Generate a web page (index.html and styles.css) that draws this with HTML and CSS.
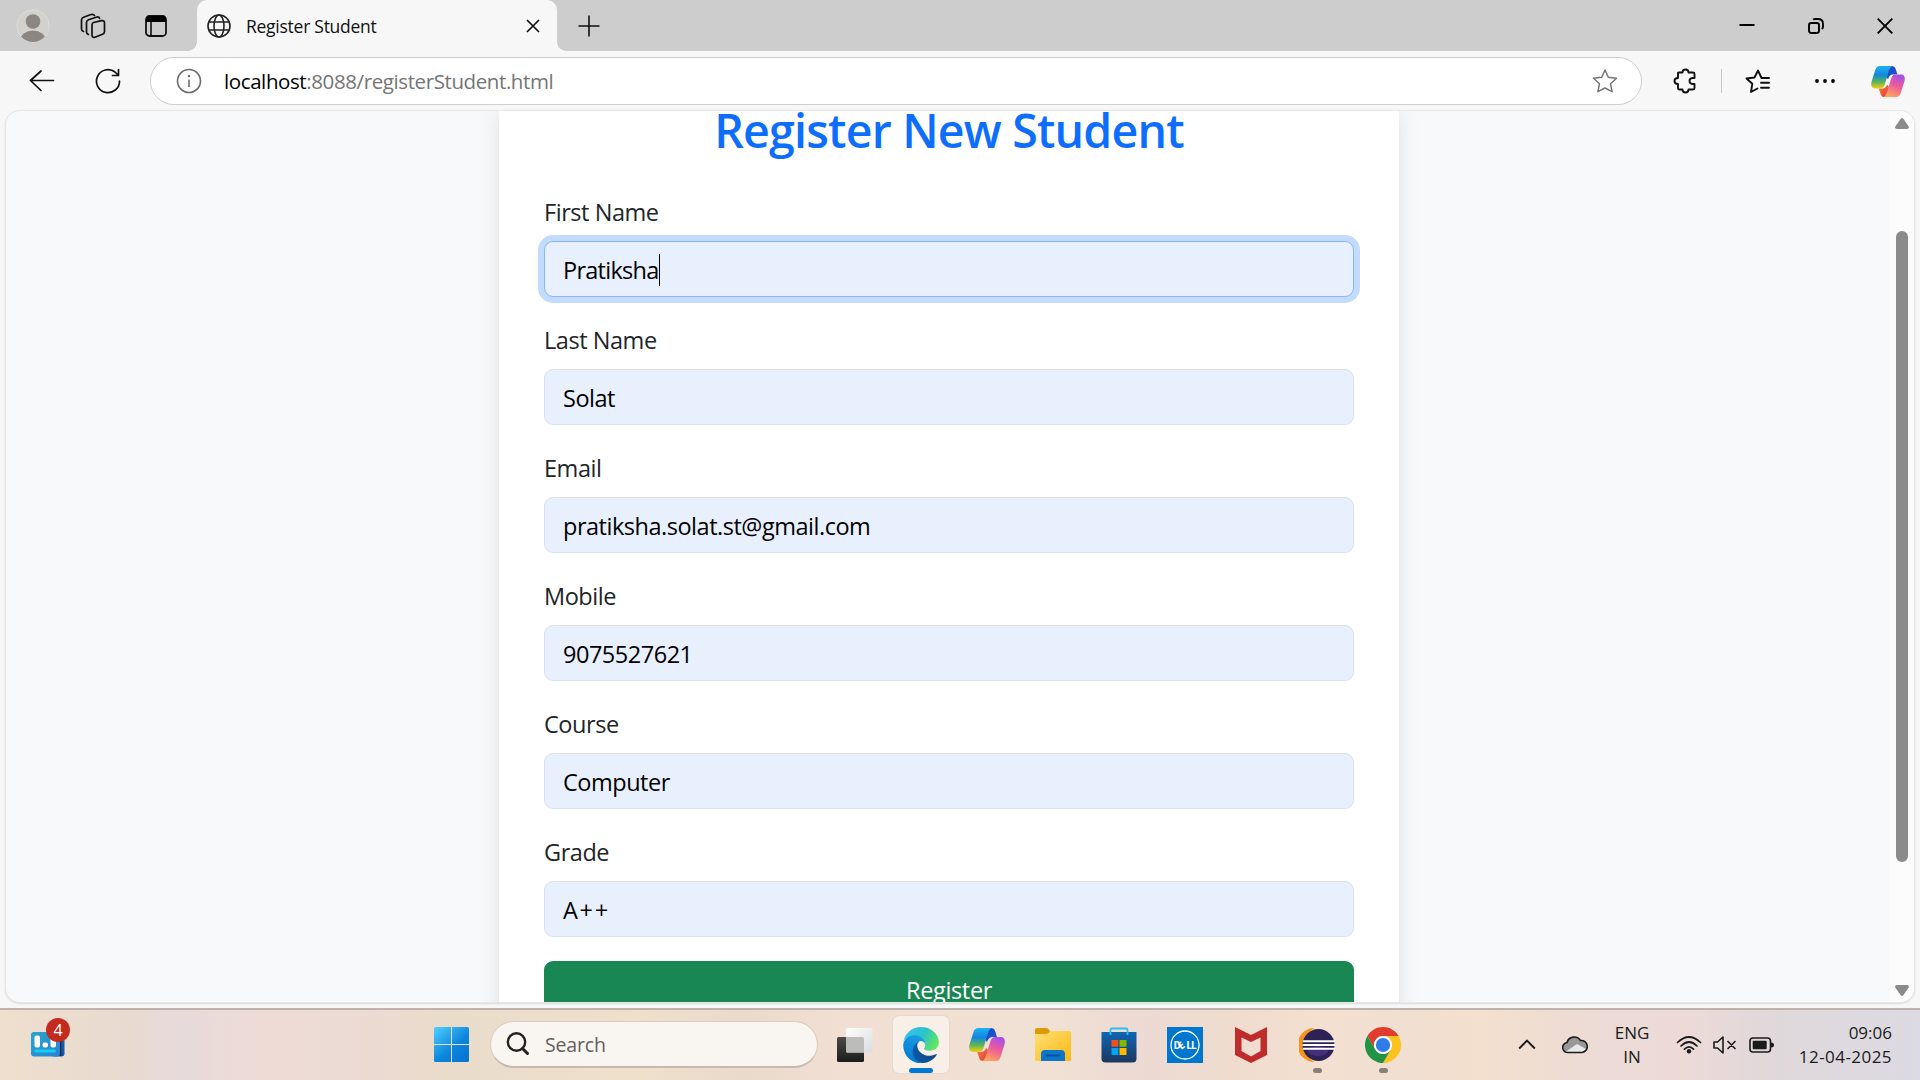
FILE: index.html
```html
<!DOCTYPE html>
<html lang="en">
<head>
<meta charset="utf-8">
<title>Register Student</title>
<link rel="stylesheet" href="styles.css">
</head>
<body>
<svg class="defs" width="0" height="0">
  <defs>
    <linearGradient id="cpLeft" x1="0" y1="0" x2="0" y2="1"><stop offset="0" stop-color="#1fb0f2"/><stop offset=".4" stop-color="#1487dc"/><stop offset=".7" stop-color="#58b45c"/><stop offset="1" stop-color="#f6cf10"/></linearGradient>
    <linearGradient id="cpFold" x1="0" y1="0" x2="1" y2="1"><stop offset="0" stop-color="#1a3fc0"/><stop offset="1" stop-color="#1b62dc"/></linearGradient>
    <linearGradient id="cpRight" x1=".8" y1="0" x2=".4" y2="1"><stop offset="0" stop-color="#a04ff0"/><stop offset=".5" stop-color="#ec5a9c"/><stop offset="1" stop-color="#ffa35c"/></linearGradient>
    <linearGradient id="cpRed" x1="0" y1="0" x2="1" y2="1"><stop offset="0" stop-color="#fb8040"/><stop offset="1" stop-color="#dc3b3c"/></linearGradient>
    <symbol id="copilot" viewBox="0 0 36 33">
      <path fill="url(#cpFold)" d="M19 0H22C26 0 26.500 4 28 9H24C20.500 9 19.500 10.500 18 14L16.500 12z"/>
      <path fill="url(#cpRed)" d="M8 24H12C14.500 24 16 22.500 17 20L19 22L17 30C16 32 15 33 13.500 33C10 33 10 28 8 24z"/>
      <path fill="url(#cpLeft)" d="M9.500 0H23C20 1 19 5 17.500 10L14.500 20C13.500 23 12 24 9 24H4C0 24-.5 20 .7 16L4.500 4C5.500 1 7 0 9.500 0z"/>
      <path fill="url(#cpRight)" d="M26.500 9H32C36 9 36.500 13 35.300 17L31.500 29C30.500 32 29 33 26.500 33H13C16 32 17 28 18.500 23L21.500 13C22.500 10 24 9 26.500 9z"/>
    </symbol>
  </defs>
</svg>

<div class="tabstrip">
  <svg class="avatar" width="34" height="34" viewBox="0 0 34 34"><circle cx="17" cy="17" r="16.200" fill="#d2d1cd" stroke="#dddcda"/><clipPath id="av"><circle cx="17" cy="17" r="16"/></clipPath><g fill="#8b8682" clip-path="url(#av)"><circle cx="17" cy="12.500" r="7.300"/><ellipse cx="17" cy="31" rx="12.500" ry="9.500"/></g></svg>
  <svg class="workspaces" width="26" height="26" viewBox="0 0 26 26" fill="none" stroke="#111" stroke-width="1.700" stroke-linejoin="round" stroke-linecap="round"><path d="M13.500 9.500L21.500 7.700Q24.500 7.200 24.500 10V18.500Q24.500 20.500 22.500 21.300L15 24.200Q12 25 12 22.200V12Q12 10 13.500 9.500z"/><path d="M8.500 21.500Q6.500 21 6.500 18.500V9.500Q6.500 7.500 8.500 6.700L17 4Q19 3.600 19.600 5.500"/><path d="M3.500 18.500Q1.500 18 1.500 16V7Q1.500 5 3.500 4.200L11 1.500Q13.500 1 14.500 2.500"/></svg>
  <svg class="tabpanel" width="22" height="22" viewBox="0 0 22 22"><rect x="1" y="1" width="20" height="20" rx="3.500" fill="none" stroke="#111" stroke-width="1.800"/><path d="M1 7V4Q1 1 4 1H18Q21 1 21 4V7z" fill="#000"/><path d="M6 7V21" stroke="#111" stroke-width="1.600"/></svg>
  <div class="tab">
    <svg width="24" height="24" viewBox="0 0 24 24" fill="none" stroke="#222" stroke-width="1.600"><circle cx="12" cy="12" r="11"/><ellipse cx="12" cy="12" rx="5" ry="11"/><path d="M2 8H22M2 16H22"/></svg>
    <span class="tab-title">Register Student</span>
    <svg class="tab-close" width="14" height="14" viewBox="0 0 14 14" stroke="#111" stroke-width="1.700"><path d="M1 1L13 13M13 1L1 13"/></svg>
  </div>
  <svg class="newtab" width="22" height="22" viewBox="0 0 22 22" stroke="#111" stroke-width="1.600"><path d="M11 .5V21.500M.5 11H21.500"/></svg>
  <div class="winctl">
    <svg width="16" height="16" viewBox="0 0 16 16" stroke="#000" stroke-width="2"><path d="M.5 7H15.500"/></svg>
    <svg width="16" height="16" viewBox="0 0 16 16" fill="none" stroke="#000" stroke-width="1.900"><rect x="1" y="5" width="10" height="10" rx="2.200"/><path d="M5 1.500Q6 1 7.500 1H10Q15 1 15 6V8.500Q15 10.200 13.800 11"/></svg>
    <svg width="16" height="16" viewBox="0 0 16 16" stroke="#000" stroke-width="1.900"><path d="M.7 .7L15.300 15.300M15.300 .7L.7 15.300"/></svg>
  </div>
</div>

<div class="toolbar">
  <svg class="back" width="26" height="24" viewBox="0 0 26 24" fill="none" stroke="#111" stroke-width="1.700" stroke-linecap="round" stroke-linejoin="round"><path d="M24.500 11.500H1.500M12 2L1.500 11.500L12 21.500"/></svg>
  <svg class="reload" width="26" height="26" viewBox="0 0 26 26" fill="none" stroke="#111" stroke-width="1.700" stroke-linecap="round" stroke-linejoin="round"><path d="M24.500 13A11.500 11.500 0 1 1 20 4L23.500 7.500M23.500 1.500V7.500H17.500"/></svg>
  <div class="address">
    <svg width="26" height="26" viewBox="0 0 26 26" fill="none" stroke="#6b6b6b" stroke-width="1.600"><circle cx="13" cy="13" r="11.500"/><path d="M13 11.500V19"/><circle cx="13" cy="8" r="1.200" fill="#6b6b6b" stroke="none"/></svg>
    <span class="url"><b>localhost</b>:8088/registerStudent.html</span>
    <svg class="star" width="26" height="26" viewBox="0 0 26 26" fill="none" stroke="#757575" stroke-width="1.500" stroke-linejoin="round"><path d="M13 2L16.300 9.200L24.500 10.200L18.500 15.700L20.100 23.700L13 20L5.900 23.700L7.500 15.700L1.500 10.200L9.700 9.200z"/></svg>
  </div>
  <svg class="puzzle" width="24" height="26" viewBox="0 0 24 26" fill="none" stroke="#111" stroke-width="1.900" stroke-linejoin="round"><path d="M5 5Q5 4.500 6 4.500H9.500Q9.500 1.500 12.500 1.500T15.500 4.500H20Q21.500 4.500 21.500 6V10H19.500Q16.500 10.300 16.500 13T19.500 16H21.500V20Q21.500 21.500 20 21.500H15.500Q15.500 24.500 12.500 24.500T9.500 21.500H6Q5 21.500 5 20V16Q1.500 16 1.500 13T5 10z"/></svg>
  <i class="divider"></i>
  <svg class="favs" width="26" height="26" viewBox="0 0 26 26" fill="none" stroke="#111" stroke-width="1.900" stroke-linejoin="round" stroke-linecap="round"><path d="M24 10H16.500L13 2.500L9.500 9.500L1.500 10.500L7.300 15.800L6 24L12.500 20.500M16 14.800H24M16 19.800H24"/></svg>
  <svg class="dots" width="20" height="4" viewBox="0 0 20 4"><circle cx="2" cy="2" r="1.900"/><circle cx="10" cy="2" r="1.900"/><circle cx="18" cy="2" r="1.900"/></svg>
  <svg class="cp" width="34" height="31"><use href="#copilot"/></svg>
</div>

<div class="frame">
  <div class="viewport">
    <div class="page">
      <div class="card">
        <h2>Register New Student</h2>
        <div class="field"><label>First Name</label><div class="control focus"><span>Pratiksha</span><i class="caret"></i></div></div>
        <div class="field"><label>Last Name</label><div class="control">Solat</div></div>
        <div class="field"><label>Email</label><div class="control">pratiksha.solat.st@gmail.com</div></div>
        <div class="field"><label>Mobile</label><div class="control">9075527621</div></div>
        <div class="field"><label>Course</label><div class="control">Computer</div></div>
        <div class="field"><label>Grade</label><div class="control grade">A++</div></div>
        <div class="submit">Register</div>
      </div>
    </div>
    <div class="scrollbar">
      <svg width="14" height="11" viewBox="0 0 14 11" fill="#8b8b8b"><path d="M5.500 1Q7-.8 8.500 1L13.700 8.500Q14.500 11 12 11H2Q-.5 11 .3 8.500z"/></svg>
      <div class="thumb"></div>
      <svg width="14" height="11" viewBox="0 0 14 11" fill="#8b8b8b"><path d="M5.500 10Q7 11.800 8.500 10L13.700 2.500Q14.500 0 12 0H2Q-.5 0 .3 2.500z"/></svg>
    </div>
  </div>
</div>

<div class="taskbar">
  <div class="widgets">
    <svg width="34" height="25" viewBox="0 0 34 25"><defs><linearGradient id="wg" x1="0" y1="0" x2="1" y2="1"><stop offset="0" stop-color="#27a8cc"/><stop offset="1" stop-color="#2d7fd6"/></linearGradient></defs><rect x="20" width="13.500" height="24.500" rx="3" fill="#1559a8"/><path d="M29.500 0V24" stroke="#0a2440" stroke-width="1.500"/><rect width="29" height="24.500" rx="3" fill="url(#wg)"/><g fill="#fff"><rect x="3.500" y="3.500" width="5.500" height="12" rx="2"/><rect x="11.500" y="10.500" width="5.500" height="5" rx="2"/><rect x="19.500" y="5" width="5.500" height="10.500" rx="2"/></g><rect x="3.500" y="17.500" width="21.500" height="3" rx="1.500" fill="#0fd0f5"/></svg>
    <span class="badge">4</span>
  </div>
  <svg class="start" width="35" height="35" viewBox="0 0 35 35"><defs><linearGradient id="win" gradientUnits="userSpaceOnUse" x1="0" y1="0" x2="30" y2="35"><stop offset="0" stop-color="#4fd0ff"/><stop offset=".6" stop-color="#0d86dc"/><stop offset="1" stop-color="#0575d2"/></linearGradient></defs><path fill="url(#win)" d="M1.500 0H17V17H0V1.500Q0 0 1.500 0zM18 0H33.500Q35 0 35 1.500V17H18zM0 18H17V35H1.500Q0 35 0 33.500zM18 18H35V33.500Q35 35 33.500 35H18z"/></svg>
  <div class="search">
    <svg width="24" height="24" viewBox="0 0 24 24" fill="none" stroke="#222" stroke-linecap="round"><circle cx="10.500" cy="10" r="8.700" stroke-width="2.400"/><path d="M16.500 16.500L21.500 21.500" stroke-width="3"/></svg>
    <span>Search</span>
  </div>
  <div class="apps">
    <div class="app"><svg width="36" height="36" viewBox="0 0 36 36"><defs><linearGradient id="tk" x1="0" y1="0" x2="0" y2="1"><stop offset="0" stop-color="#4a4a48"/><stop offset="1" stop-color="#1c1c1c"/></linearGradient><linearGradient id="tw" x1="0" y1="0" x2="1" y2="1"><stop offset="0" stop-color="#fff"/><stop offset="1" stop-color="#dadcdf"/></linearGradient></defs><rect x="0" y="10" width="27" height="25" rx="1.500" fill="url(#tk)"/><rect x="9" y="1" width="26.500" height="24.500" rx="1.500" fill="url(#tw)"/><path d="M9 10H25.500Q27 10 27 11.500V25.500H10.500Q9 25.500 9 24z" fill="#bcbcbb"/></svg></div>
    <div class="app active"><svg width="36" height="36" viewBox="0 0 256 259"><defs><linearGradient id="e1" x1="0" y1="0" x2="1" y2="0"><stop offset="0" stop-color="#0c59a4"/><stop offset="1" stop-color="#114a8b"/></linearGradient><linearGradient id="e2" x1=".6" y1="0" x2=".3" y2="1"><stop offset="0" stop-color="#1b9de2"/><stop offset="1" stop-color="#0078d4"/></linearGradient><linearGradient id="e3" x1="0" y1=".3" x2="1" y2=".7"><stop offset="0" stop-color="#35c1f1"/><stop offset=".5" stop-color="#2cc3c9"/><stop offset="1" stop-color="#66eb55"/></linearGradient></defs><path fill="url(#e1)" d="M235.680 195.460a93.730 93.730 0 0 1-10.540 4.710 101.870 101.870 0 0 1-35.900 6.460c-47.320 0-88.540-32.550-88.540-74.320A31.480 31.480 0 0 1 117.130 105c-42.800 1.800-53.800 46.400-53.800 72.530 0 73.880 68.090 81.370 82.760 81.370 7.910 0 19.840-2.300 27-4.560l1.310-.44a128.340 128.340 0 0 0 66.600-52.800 4 4 0 0 0-5.320-5.640z"/><path fill="url(#e2)" d="M105.730 246.420a79.200 79.200 0 0 1-22.740-21.340 80.720 80.720 0 0 1 29.530-120c3.120-1.470 8.450-4.130 15.540-4a32.350 32.350 0 0 1 25.690 13 31.880 31.880 0 0 1 6.360 18.660c0-.21 24.460-79.600-80-79.600-43.900 0-80 41.660-80 78.210a130.150 130.150 0 0 0 12.110 56 128 128 0 0 0 156.380 67.110 75.550 75.550 0 0 1-62.780-8z"/><path fill="url(#e3)" d="M152.330 148.860c-.81 1.050-3.300 2.500-3.300 5.660 0 2.610 1.700 5.120 4.720 7.230 14.380 10 41.490 8.680 41.560 8.680a59.560 59.560 0 0 0 30.270-8.350 61.380 61.380 0 0 0 30.430-52.880c.26-22.410-8-37.310-11.340-43.910C223.460 23.840 177.720 0 128 0A128 128 0 0 0 0 126.200c.48-36.540 36.800-66.050 80-66.050 3.500 0 23.460.34 42 10.070 16.340 8.580 24.900 18.940 30.850 29.210 6.180 10.670 7.280 24.150 7.280 29.520 0 5.370-2.740 13.330-7.800 19.910z"/></svg></div>
    <div class="app"><svg width="36" height="33"><use href="#copilot"/></svg></div>
    <div class="app"><svg width="36" height="33" viewBox="0 0 36 33"><defs><linearGradient id="fo" x1="0" y1="0" x2="1" y2="1"><stop offset="0" stop-color="#ffe078"/><stop offset="1" stop-color="#fbb710"/></linearGradient></defs><path fill="#dc9a05" d="M0 1.500Q0 0 1.500 0H11Q12.500 0 13.500 1.200L15.500 4L13 8H0z"/><path fill="url(#fo)" d="M0 6H11Q12.500 6 13.500 5L14.500 4Q15.500 3 17 3H34.500Q36 3 36 4.500V31.500Q36 33 34.500 33H1.500Q0 33 0 31.500z"/><path fill="#0e76c8" d="M6 33V26Q6 22 10 22H26Q30 22 30 26V33z"/><rect x="10.500" y="26.500" width="15" height="2" rx="1" fill="#0a509a"/></svg></div>
    <div class="app"><svg width="36" height="36" viewBox="0 0 36 36"><defs><linearGradient id="st" x1="0" y1="0" x2="0" y2="1"><stop offset="0" stop-color="#0f66b4"/><stop offset="1" stop-color="#1c375e"/></linearGradient></defs><path fill="url(#st)" d="M.5 5H35.500V31.500Q35.500 35.500 31.500 35.500H4.500Q.5 35.500 .5 31.500z"/><path d="M9.500 8V3Q9.500 1.500 11 1.500H25Q26.500 1.500 26.500 3V8" fill="none" stroke="#29c0f2" stroke-width="1.800"/><path fill="#f25022" d="M10.500 13H17.300V19.700H10.500z"/><path fill="#7fba00" d="M18.500 13H25.500V19.700H18.500z"/><path fill="#00a4ef" d="M10.500 21H17.300V28H10.500z"/><path fill="#ffb900" d="M18.500 21H25.500V28H18.500z"/></svg></div>
    <div class="app"><svg width="36" height="36" viewBox="0 0 36 36"><rect width="36" height="36" fill="#0076ce"/><circle cx="18" cy="18" r="14" fill="none" stroke="#fff" stroke-width="1.300"/><g class="dell"><text x="6.500" y="21.500">D</text><text transform="translate(14.200 23) rotate(-38)">E</text><text x="19.200" y="21.500">L</text><text x="24" y="21.500">L</text></g></svg></div>
    <div class="app"><svg width="32" height="36" viewBox="0 0 32 36"><path fill="#c02c2c" fill-rule="evenodd" d="M0 0L16 8L32 0V28L16 36L0 28zM6.500 10.500V24L16 29.500L25.500 24V10.500L16 15z"/></svg></div>
    <div class="app running"><svg width="36" height="34" viewBox="0 0 36 34"><path fill="#f7941e" d="M15.500 0A17 17 0 0 0 15.500 34A20 20 0 0 1 15.500 0z"/><circle cx="19.500" cy="17" r="16" fill="#2c2255"/><ellipse cx="19" cy="23" rx="10" ry="5" fill="#44307a"/><path d="M4 13.200H36M3.500 17H36M4 20.800H36" stroke="#fff" stroke-width="2"/></svg></div>
    <div class="app running"><svg width="36" height="36" viewBox="2 2 44 44"><path fill="#e33b2e" d="M4.950 13A22 22 0 0 1 43.050 13H24A11 11 0 0 0 14.470 29.500z"/><path fill="#fcc31e" d="M24 13H43.050A22 22 0 0 1 24 46L33.530 29.500A11 11 0 0 0 24 13z"/><path fill="#229342" d="M24 46A22 22 0 0 1 4.950 13L14.470 29.500A11 11 0 0 0 33.530 29.500z"/><circle cx="24" cy="24" r="11" fill="#fff"/><circle cx="24" cy="24" r="8.700" fill="#2f7be8"/></svg></div>
  </div>
  <div class="tray">
    <svg class="chev" width="18" height="11" viewBox="0 0 18 11" fill="none" stroke="#1b1b1b" stroke-width="1.900"><path d="M1.200 9.500L9 1.700L16.800 9.500"/></svg>
    <svg class="cloud" width="26" height="18" viewBox="0 0 26 18"><path d="M6.500 16.500A5 5 0 0 1 5 6.500A7.500 7.500 0 0 1 18.500 4.500A6 6 0 0 1 20 16.500z" fill="#989898"/><path d="M4 15.500L15 8L24 13L20 16.500H6.500z" fill="#e8e8e8"/><path d="M6.500 16.500A5 5 0 0 1 5 6.500A7.500 7.500 0 0 1 18.500 4.500A6 6 0 0 1 20 16.500z" fill="none" stroke="#1b1b1b" stroke-width="1.600"/></svg>
    <div class="lang"><span>ENG</span><span>IN</span></div>
    <svg class="wifi" width="26" height="18" viewBox="0 0 26 18" fill="none" stroke="#1b1b1b" stroke-width="1.700" stroke-linecap="round"><path d="M1.500 6.500Q13-4.500 24.500 6.500M5 10Q13 2 21 10M8.500 13.200Q13 8.500 17.500 13.200"/><circle cx="13" cy="15.300" r="2.200" fill="#1b1b1b" stroke="none"/></svg>
    <svg class="vol" width="24" height="18" viewBox="0 0 24 18" fill="none" stroke="#1b1b1b" stroke-width="1.600" stroke-linejoin="round"><path d="M1 6H4.500L10 1V17L4.500 12H1zM14.500 5L22.500 13M22.500 5L14.500 13"/></svg>
    <svg class="batt" width="25" height="16" viewBox="0 0 25 16"><rect x="1" y="1" width="20.500" height="14" rx="3" fill="none" stroke="#1b1b1b" stroke-width="1.600"/><rect x="3.700" y="3.700" width="14" height="8.600" rx="1" fill="#1b1b1b"/><path d="M22 5.500Q25 5.500 25 8T22 10.500z" fill="#1b1b1b"/></svg>
    <div class="clock"><span>09:06</span><span class="date">12-04-2025</span></div>
  </div>
</div>
</body>
</html>
```
FILE: styles.css
```css
* { box-sizing: border-box; }
body {
  margin: 0;
  width: 1920px;
  height: 1080px;
  overflow: hidden;
  display: flex;
  flex-direction: column;
  background: #f7f7f7;
  font-family: "Open Sans", "Noto Sans", sans-serif;
  color: #111;
}
svg { display: block; flex: none; }
.defs { position: absolute; }

.tabstrip { height: 51px; flex: none; display: flex; align-items: center; background: #cdcdcd; padding-left: 16px; }
.workspaces { margin-left: 30px; }
.tabpanel { margin-left: 39px; }
.tab {
  position: relative;
  width: 360px;
  height: 51px;
  margin-left: 30px;
  padding: 0 17px 0 10px;
  display: flex;
  align-items: center;
  background: #f7f7f7;
  border-radius: 10px 10px 0 0;
}
.tab::before, .tab::after { content: ""; position: absolute; bottom: 0; width: 9px; height: 9px; }
.tab::before { left: -9px; background: radial-gradient(circle at 0 0, transparent 8.5px, #f7f7f7 9px); }
.tab::after { right: -9px; background: radial-gradient(circle at 100% 0, transparent 8.5px, #f7f7f7 9px); }
.tab-title { margin-left: 15px; font-size: 17.5px; letter-spacing: -.26px; }
.tab-close { margin-left: auto; }
.newtab { margin-left: 21px; }
.winctl { margin-left: auto; display: flex; gap: 53px; padding-right: 27px; }

.toolbar { height: 60px; flex: none; display: flex; align-items: center; padding-left: 29px; }
.reload { margin-left: 40px; }
.address {
  margin-left: 29px;
  width: 1492px;
  height: 48px;
  padding: 0 23px 0 25px;
  display: flex;
  align-items: center;
  background: #fff;
  border: 1px solid #cfcfcf;
  border-radius: 24px;
}
.url { margin-left: 22px; font-size: 20.5px; letter-spacing: -.4px; color: #757575; }
.url b { font-weight: 400; color: #000; }
.star { margin-left: auto; }
.puzzle { margin-left: 31px; }
.divider { width: 1px; height: 24px; margin-left: 24px; background: #c8c8c8; }
.favs { margin-left: 23px; }
.dots { margin-left: 44px; }
.cp { margin-left: 36px; }

.frame { height: 899px; flex: none; padding: 0 6px; border-bottom: 2px solid #bfb2ac; }
.viewport {
  height: 891px;
  display: flex;
  overflow: hidden;
  background: #f8f9fb;
  border-radius: 14px;
  box-shadow: 0 0 0 1px #e6e6e6, 0 1px 2px 1px #dcdcdc;
}
.page { flex: 1; padding-left: 493px; }
.card { width: 900px; height: 940px; padding: 0 45px; background: #fff; box-shadow: 0 0 22px rgba(0, 0, 0, .1); }
h2 { margin: 0; height: 82px; line-height: 38px; text-align: center; font-size: 46.5px; letter-spacing: -.8px; font-weight: 600; color: #0d6efd; }
.field { height: 128px; display: flex; flex-direction: column; }
label { height: 48px; line-height: 39px; font-size: 23.5px; letter-spacing: -.45px; color: #212529; }
.control {
  height: 56px;
  padding: 1px 18px 0;
  display: flex;
  align-items: center;
  border: 1px solid #dbe0e8;
  border-radius: 9px;
  background: #e8f0fe;
  font-size: 23.5px;
  letter-spacing: -.48px;
  color: #000;
}
.focus { border-color: #86b7fe; box-shadow: 0 0 0 6px #c2dbfe; letter-spacing: -.73px; }
.grade { letter-spacing: 1.7px; }
.caret { width: 1px; height: 32px; background: #000; }
.submit { height: 57px; background: #198754; color: #fff; border-radius: 9px; text-align: center; font-size: 23.5px; letter-spacing: -.35px; line-height: 59px; }
.scrollbar { width: 24px; background: #fcfcfc; display: flex; flex-direction: column; align-items: center; padding: 7px 0 6px; }
.thumb { width: 12px; height: 631px; margin: 102px 0 123px; border-radius: 6px; background: #8b8b8b; }

.taskbar {
  flex: 1;
  display: flex;
  align-items: center;
  padding-bottom: 1px;
  background: linear-gradient(90deg, #eedfce 0, #e8dad0 130px, #e7dadb 180px, #eedbd6 260px, #ecdad4 350px, #eadccb 450px, #efe0cc 640px, #e9dacb 740px, #f1dfd3 840px, #f1e0d4 1060px, #ecdad3 1140px, #efdccf 1230px, #f3e0d0 1320px, #f1dfd2 1400px, #f3e0ce 1480px, #ecdbd6 1600px, #eddad7 1680px, #dfd8db 1780px, #dcdae2 1920px);
}
.widgets { position: relative; margin-left: 31px; width: 34px; }
.badge {
  position: absolute;
  left: 15px;
  top: -14px;
  width: 24px;
  height: 24px;
  border-radius: 50%;
  background: #c42b1c;
  color: #fff;
  font-size: 16px;
  line-height: 24px;
  text-align: center;
}
.start { margin-left: 369px; }
.search {
  width: 328px;
  height: 47px;
  margin-left: 21px;
  padding-left: 15px;
  display: flex;
  align-items: center;
  gap: 15px;
  border: 1px solid #dccbc0;
  border-bottom: 2px solid #c9b8ad;
  border-radius: 24px;
  background: #f9f5f1;
  font-size: 19.5px;
  letter-spacing: -.15px;
  color: #64605d;
}
.apps { margin-left: 9px; display: flex; gap: 10px; }
.app { position: relative; width: 56px; height: 57px; display: flex; align-items: center; justify-content: center; border-radius: 6px; }
.active { background: #f8efe9; box-shadow: 0 0 0 1px #e6d8ce; }
.active::after, .running::after { content: ""; position: absolute; bottom: 0; height: 5px; border-radius: 3px; }
.active::after { width: 24px; background: #0078d4; }
.running::after { width: 9px; background: #8a8079; }
.dell { fill: #fff; font: 700 10px "Open Sans", sans-serif; }
.tray { flex: 1; display: flex; align-items: center; color: #1b1b1b; font-size: 17px; }
.chev { margin-left: 107px; }
.cloud { margin-left: 26px; }
.lang, .clock { display: flex; flex-direction: column; line-height: 24px; }
.lang { width: 60px; margin-left: 14px; align-items: center; }
.wifi { margin-left: 14px; }
.vol { margin-left: 11px; }
.batt { margin-left: 12px; }
.clock { margin-left: auto; margin-right: 28px; align-items: flex-end; }
.date { letter-spacing: .45px; }
```
